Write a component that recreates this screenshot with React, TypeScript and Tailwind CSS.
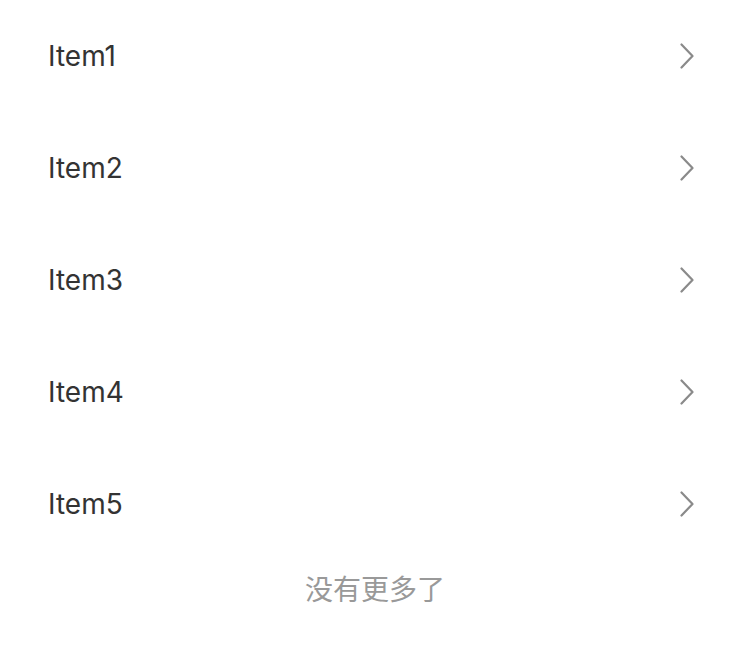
const items = ["Item1", "Item2", "Item3", "Item4", "Item5"];

export default function App() {
  return (
    <div className="min-h-[667px] bg-white font-['Inter','Noto_Sans_CJK_SC',sans-serif]">
      {items.map((item) => (
        <div key={item} className="flex h-[112px] items-center justify-between pl-[48px] pr-[56px]">
          <span className="text-[28px] text-[#333333]">{item}</span>
          <svg width="14" height="26" viewBox="0 0 14 26" fill="none">
            <path d="M1.5 1.5 L12.5 13 L1.5 24.5" stroke="#8a8a8a" strokeWidth="2.2" strokeLinecap="round" strokeLinejoin="round" />
          </svg>
        </div>
      ))}
      <div className="flex h-[60px] items-center justify-center text-[28px] text-[#999999]">没有更多了</div>
    </div>
  );
}
